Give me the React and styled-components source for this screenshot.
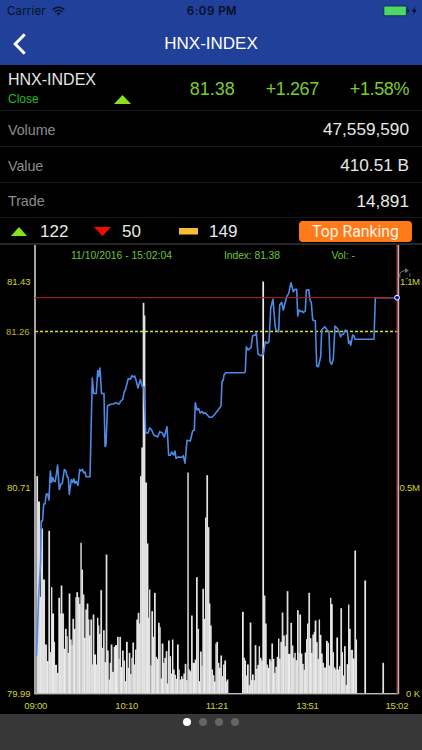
import React from 'react';
import styled, { createGlobalStyle } from 'styled-components';

const GlobalStyle = createGlobalStyle`
  * {
    box-sizing: border-box;
  }

  body {
    margin: 0;
    background: #000;
    font-family: "Liberation Sans", Arial, sans-serif;
  }
`;

const Screen = styled.div`
  width: 422px;
  height: 750px;
  display: flex;
  flex-direction: column;
  background: #000;
  overflow: hidden;
  white-space: nowrap;
`;

const StatusBar = styled.div`
  display: grid;
  grid-template-columns: 1fr auto 1fr;
  align-items: center;
  height: 20px;
  padding: 2px 5px 0 7px;
  background: #21409a;
  color: #080f26;
  font-family: Inter, sans-serif;
  font-size: 11.5px;
`;

const Carrier = styled.div`
  display: flex;
  align-items: center;
  gap: 6px;
  letter-spacing: 0.15px;
`;

const Clock = styled.div`
  font-weight: 600;
  letter-spacing: 0.5px;
`;

const Power = styled.div`
  display: flex;
  justify-content: flex-end;
`;

const NavBar = styled.div`
  display: grid;
  grid-template-columns: 60px 1fr 60px;
  align-items: center;
  height: 45px;
  padding-top: 2px;
  background: #21409a;
`;

const BackButton = styled.button`
  display: flex;
  padding: 0 0 0 12px;
  border: none;
  background: none;
`;

const Title = styled.h1`
  margin: 0;
  color: #fff;
  font-size: 17px;
  font-weight: 400;
  text-align: center;
`;

const Summary = styled.div`
  display: flex;
  height: 46px;
  padding-right: 13px;
  border-bottom: 1px solid #171717;
`;

const SymbolBlock = styled.div`
  width: 133px;
  padding: 6px 0 0 8px;
`;

const SymbolName = styled.div`
  color: #e6e6e6;
  font-size: 16px;
  line-height: 18px;
`;

const SymbolState = styled.div`
  display: flex;
  justify-content: space-between;
  padding: 3px 2px 0 0;
  color: #22bd22;
  font-size: 12px;
  line-height: 14px;
`;

const Figures = styled.div`
  display: flex;
  flex: 1;
  align-items: center;
  justify-content: flex-end;
  padding-top: 4px;
  gap: 31px;
  color: #7ccb30;
  font-size: 18px;
`;

const Figure = styled.span`
  letter-spacing: ${(props) => props.$spacing || 0}px;
`;

const Row = styled.div`
  display: flex;
  align-items: center;
  justify-content: space-between;
  height: ${(props) => props.$height || 36}px;
  padding: 2px 13px 0 8px;
  border-bottom: 1px solid #171717;
`;

const Label = styled.span`
  color: #8c8c8c;
  font-size: 14.3px;
  letter-spacing: -0.05px;
`;

const Value = styled.span`
  color: #e8e8e8;
  font-size: 17.2px;
`;

const Breadth = styled.div`
  display: flex;
  align-items: center;
  height: 25px;
  padding: 2px 10px 0 11px;
`;

const Count = styled.div`
  display: flex;
  align-items: center;
  gap: ${(props) => props.$gap}px;
  width: ${(props) => props.$width}px;
  color: #e8e8e8;
  font-size: 17px;
`;

const RankingButton = styled.button`
  width: 113px;
  height: 21px;
  margin-left: auto;
  padding: 0;
  border: none;
  border-radius: 4px;
  background: #ff7b1a;
  color: #fff3e4;
  font-family: Roboto, sans-serif;
  font-size: 15.8px;
  line-height: 21px;
`;

const Chart = styled.svg`
  display: block;
  flex: none;
  border-top: 2px solid #262626;
  font-family: "Liberation Sans", Arial, sans-serif;
  font-size: 9.5px;
`;

const Pager = styled.div`
  display: flex;
  flex: 1;
  justify-content: center;
  gap: 8px;
  padding-top: 4px;
  background: #373737;
`;

const Dot = styled.span`
  width: 8px;
  height: 8px;
  border-radius: 50%;
  background: ${(props) => (props.$active ? '#fff' : '#646464')};
`;

// Volume bars, in thirds of a pixel: [left edge, top] counted from x and base
const volume = [
  {
    x: 60,
    base: 432,
    end: 450,
    bars: [
      [49, -220], [53, -144], [59, 142], [62, -63], [68, 90], [74, 285], [80, 335], [85, -56], [89, 308], [93, 113],
      [96, 192], [101, 277], [104, 346], [110, 370], [115, 145], [119, 192], [122, 108], [126, 192], [131, 298],
      [135, 238], [139, 260], [142, 310], [146, 132], [150, 270], [154, 286], [157, 208], [161, 238], [166, 143],
      [169, 128], [173, 143], [177, 163], [181, -20], [184, 60], [188, 135], [192, 265], [196, 180], [200, 162],
      [204, 210], [207, 258], [211, 210], [215, 345], [218, 195], [222, 315], [227, 345], [231, 205], [234, 228],
      [237, 253], [241, 122], [245, 295], [249, 242], [253, 338], [257, 15], [261, 303], [265, 390], [269, 340],
      [272, 285], [276, 367], [281, 292], [285, 287], [291, 262], [295, 328], [298, 262], [302, 353], [306, 303],
      [310, 333], [314, 395], [318, 277], [322, 355], [326, 310], [330, 374], [334, 325], [337, 279], [341, 345],
      [345, 300], [349, 210], [353, 190], [357, 222], [360, -220], [364, -306], [368, -740], [372, -702],
      [375, -201], [380, -18], [384, 205], [387, 120],
    ],
  },
  {
    x: 450,
    base: 432,
    end: 864,
    bars: [
      [1, 348], [4, 185], [8, 262], [12, 130], [16, 322], [20, 328], [24, 220], [28, 233], [31, 387], [35, 282],
      [39, 340], [43, 325], [47, 305], [51, 402], [54, 273], [58, 320], [62, 372], [66, 270], [69, 360], [73, 376],
      [77, 388], [81, 285], [85, 360], [88, 390], [93, 380], [96, 388], [100, 372], [104, 343], [108, 392],
      [112, -231], [115, 360], [119, 365], [123, 198], [127, 340], [134, 330], [138, 83], [142, 238], [146, 395],
      [150, 306], [154, 348], [157, 118], [161, 208], [165, -96], [169, -223], [173, -67], [177, 162], [180, 228],
      [184, 360], [188, 377], [192, 396], [196, 282], [199, 277], [203, 340], [207, 355], [211, 318], [215, 380],
      [219, 345], [223, 333], [227, 396], [230, 390], [234, 432], [276, 187], [280, 325], [284, 333], [287, 378],
      [291, 345], [295, 407], [299, 219], [303, 392], [306, 375], [310, 392], [314, 287], [318, 358], [322, 346],
      [326, 290], [329, 325], [333, 333], [337, -804], [341, 138], [345, 222], [349, 345], [353, 355], [357, 329],
      [361, 335], [364, 282], [368, 328], [372, 370], [376, 352], [380, 322], [384, 267], [387, 327], [391, 277],
      [395, 189], [399, 258], [403, 290], [407, 255], [410, 125],
    ],
  },
  {
    x: 840,
    base: 462,
    end: 1151,
    bars: [
      [24, 343], [31, 250], [35, 318], [39, 355], [43, 340], [46, 362], [51, 212], [55, 340], [58, 225], [62, 342],
      [66, 373], [70, 391], [74, 339], [78, 299], [81, 252], [85, 160], [89, 296], [93, 340], [97, 285], [101, 277],
      [104, 243], [108, 308], [112, 358], [116, 240], [119, 286], [123, 342], [127, 370], [131, 384], [138, 304],
      [142, 310], [146, 378], [150, 175], [153, 194], [157, 338], [161, 384], [165, 390], [169, 294], [173, 390],
      [177, 380], [181, 206], [185, 338], [188, 408], [192, 320], [196, 436], [200, 374], [204, 195], [207, 268],
      [211, 331], [218, 357], [223, 33], [227, 300], [230, 462], [253, 123], [257, 462], [307, 370],
    ],
  },
];

const bars = volume.flatMap(({ x, base, end, bars }) =>
  bars.map(([left, top], i) => ({
    x: (x + left) / 3,
    width: ((i + 1 < bars.length ? x + bars[i + 1][0] : end) - x - left) / 3,
    height: (base - top) / 3,
  }))
);

const barShades = ['#e2e2e2', '#dcdcdc', '#ececec', '#e0e0e0'];

// Index line
const price = `36.5,656 38.5,600 40.7,560 41.3,521 42.5,521 43.7,504 45,504 46.3,494 47.7,494 49,500 50.3,471
  51.5,482.5 52.7,477.5 54,481.5 55.3,481.5 57.6,465 59.3,489.5 61,484 62.3,483.3 64.3,469.5 65.7,470.7 67.3,477
  68.3,477.5 69.3,494.5 71.3,479.5 72.7,482.5 73.7,478.7 75,483.3 76.3,481.3 78,485.5 79.7,469.5 80.7,471 82.3,469.3
  83.7,472.7 85,472 86,476.7 90,476.7 92.3,378 93.7,393.5 96.3,393.5 97.7,370.5 98.7,376.5 100,368 101.5,393.5
  104,393.5 105,446.5 106,445 107.5,406 110,404.5 113.3,404 115.3,403 116.7,402.7 118,404 119.3,404 120.7,401
  122.7,399.3 124.3,391.7 125.3,390 128.3,378.5 130.3,379.3 132,375.7 133.3,377 134.7,376 136,380 138,388
  140.3,379.5 142.3,386.7 144,386.7 145.7,433 148,433 149.7,427.7 151.7,430 153.7,435 157.7,437 159.7,431.7
  162,432.7 164.3,437 167,426.7 168.7,455.3 170.3,455.3 171.7,452 173.7,455 175,451 176,458.3 178.3,457 182.7,457.3
  183.3,455.7 185,463.3 187,440.3 190.3,441 191.7,435 192.7,431 194.3,430 195.3,402.7 197,410 198.7,408.7
  200.3,413 202.3,411.3 203.7,413.7 205.3,412.7 209.3,417.3 212,417.3 215,414 217.3,411 221,406 222,381.7 223.3,380
  224,375 225.7,372.7 244.3,372.7 245.3,371.7 246.3,346.7 248,350 251,347.7 252.7,335.7 255.3,335 256.3,332.7
  258,354 261,355.7 263.3,354.3 265.3,341.7 267.3,343.3 269,341.7 270.7,308.3 273,299.3 275,325 276,330 278.7,331.7
  279.7,305 281.7,302.3 283.3,310 286.7,296.7 288.7,293.3 291,282.7 293.3,291.7 295,289.3 296.7,289.3 297.7,316
  299,310 301,311.7 302.3,311 303.3,312.7 305.3,311 306.3,290 308.7,289.7 310,300 311.3,302.7 312.7,320 315.3,320.7
  316.7,366 318.3,366.7 320.7,356.7 321.7,330 324.7,326.7 327.7,330.7 329,331.7 330,361.7 331.7,364.3 333.3,359
  335,326 338,329.3 340.7,336.7 342,334.3 343.3,334.3 345.3,330 347.3,331 348.7,343.3 349.7,341 350.7,345.3
  352.7,335 354,335.7 355,339.3 374,339.3 375.3,297.7 396.7,297.7`;

const IndexChart = () => (
  <Chart width="422" height="471" viewBox="0 245 422 469">
    <rect x="34" y="245" width="2" height="449" fill="#a5a3a5" />
    <g>
      {/* slightly wider than the step so neighbours leave no seam */}
      {bars.map((bar, i) => (
        <rect
          key={i}
          x={bar.x}
          y={693.5 - bar.height}
          width={bar.height > 0 ? bar.width + 0.4 : 0}
          height={bar.height}
          fill={barShades[i % barShades.length]}
        />
      ))}
    </g>
    <rect x="34" y="693" width="364" height="1.4" fill="#bdbdbd" />
    <line x1="35" y1="331.6" x2="398" y2="331.6" stroke="#dede2c" strokeWidth="1.5" strokeDasharray="3 2" />
    <polyline points={price} fill="none" stroke="#4c8ae6" strokeWidth="1.6" strokeLinejoin="round" />
    <rect x="396.4" y="245" width="1.3" height="449" fill="#b3202c" />
    <rect x="397.6" y="245" width="1.6" height="449" fill="#b9aeb0" />
    <line x1="35" y1="297.6" x2="398" y2="297.6" stroke="#a81d29" strokeWidth="1.4" strokeOpacity="0.9" />
    <circle cx="397" cy="297.7" r="2.4" fill="#0a0ae0" stroke="#fff" strokeWidth="1" />
    <g fill="none" stroke="#6e6e6e" strokeWidth="1.1">
      <path d="M400 277.5 C398.5 273.5 401 270.5 406 270.5" />
      <path d="M410 273.5 C410.5 276 409 278.5 405 279" strokeDasharray="3 2" />
      <path d="M405 268 L409 270.5 L405 273 Z" fill="#6e6e6e" stroke="none" />
    </g>

    <g fill="#6fc52e" fontSize="10.3">
      <text x="71" y="258.8" textLength="101">11/10/2016 - 15:02:04</text>
      <text x="224" y="258.8" textLength="56">Index: 81.38</text>
      <text x="331.5" y="258.8" textLength="23.5">Vol: -</text>
    </g>
    <g fill="#d6d61e">
      <text x="7" y="285.4" textLength="23.5">81.43</text>
      <text x="6" y="335" textLength="23.5" fill="#b5b51e">81.26</text>
      <text x="7" y="491" textLength="23.5">80.71</text>
      <text x="7" y="696.6" textLength="23.5">79.99</text>
      <text x="400" y="285.4" textLength="20">1.1M</text>
      <text x="399.5" y="491" textLength="20.5">0.5M</text>
      <text x="406" y="696.6" textLength="14">0 K</text>
      <text x="24.3" y="709.3" textLength="23">09:00</text>
      <text x="115.3" y="709.3" textLength="23">10:10</text>
      <text x="205.7" y="709.3" textLength="22.5">11:21</text>
      <text x="296.3" y="709.3" textLength="22.5">13:51</text>
      <text x="385.5" y="709.3" textLength="23">15:02</text>
    </g>
  </Chart>
);

const App = () => {
  return (
    <>
      <GlobalStyle />
      <Screen>
        <StatusBar>
          <Carrier>
            Carrier
            <svg width="13" height="10" viewBox="0 0 13 10" fill="none" stroke="#080f26" strokeWidth="1.6">
              <path d="M0.7 3.6 C4 0.4 9 0.4 12.3 3.6" />
              <path d="M2.8 5.9 C5 3.9 8 3.9 10.2 5.9" />
              <path d="M4.5 7.3 C5.7 6.3 7.3 6.3 8.5 7.3 L6.5 9.4 Z" fill="#080f26" stroke="none" />
            </svg>
          </Carrier>
          <Clock>6:09 PM</Clock>
          <Power>
            <svg width="34" height="12" viewBox="0 0 34 12">
              <rect x="0.8" y="1" width="22.6" height="9.8" rx="1.4" fill="#4cd964" stroke="#142f57" />
              <path d="M24.4 4 Q26 4.4 26 5.9 Q26 7.4 24.4 7.8 Z" fill="#080f26" />
              <path d="M32.5 1.2 L28.6 6.4 L31 6.4 L29.7 10.2 L33.8 5 L31.4 5 Z" fill="#080f26" />
            </svg>
          </Power>
        </StatusBar>

        <NavBar>
          <BackButton aria-label="Back">
            <svg width="16" height="22" viewBox="0 0 16 22" fill="none" stroke="#fff" strokeWidth="3">
              <path d="M12.8 1.2 L3.2 11 L12.8 20.8" />
            </svg>
          </BackButton>
          <Title>HNX-INDEX</Title>
        </NavBar>

        <Summary>
          <SymbolBlock>
            <SymbolName>HNX-INDEX</SymbolName>
            <SymbolState>
              Close
              <svg width="17" height="13" viewBox="0 0 17 13">
                <path d="M0 12 L8.5 3 L17 12 Z" fill="#86e31c" />
              </svg>
            </SymbolState>
          </SymbolBlock>
          <Figures>
            <Figure>81.38</Figure>
            <Figure $spacing={-0.4}>+1.267</Figure>
            <Figure $spacing={-0.4}>+1.58%</Figure>
          </Figures>
        </Summary>

        <Row>
          <Label>Volume</Label>
          <Value>47,559,590</Value>
        </Row>
        <Row>
          <Label>Value</Label>
          <Value>410.51 B</Value>
        </Row>
        <Row $height={35}>
          <Label>Trade</Label>
          <Value>14,891</Value>
        </Row>

        <Breadth>
          <Count $gap={13} $width={83}>
            <svg width="16" height="9" viewBox="0 0 16 9">
              <path d="M0 9 L8 0 L16 9 Z" fill="#86e31c" />
            </svg>
            122
          </Count>
          <Count $gap={11} $width={85}>
            <svg width="17" height="9" viewBox="0 0 17 9">
              <path d="M0 0 L17 0 L8.5 9 Z" fill="#f50a00" />
            </svg>
            50
          </Count>
          <Count $gap={11} $width={70}>
            <svg width="19" height="7" viewBox="0 0 19 7">
              <rect width="19" height="6.5" fill="#f7bd33" />
            </svg>
            149
          </Count>
          <RankingButton>Top Ranking</RankingButton>
        </Breadth>

        <IndexChart />

        <Pager>
          <Dot $active />
          <Dot />
          <Dot />
          <Dot />
        </Pager>
      </Screen>
    </>
  );
};

export default App;
